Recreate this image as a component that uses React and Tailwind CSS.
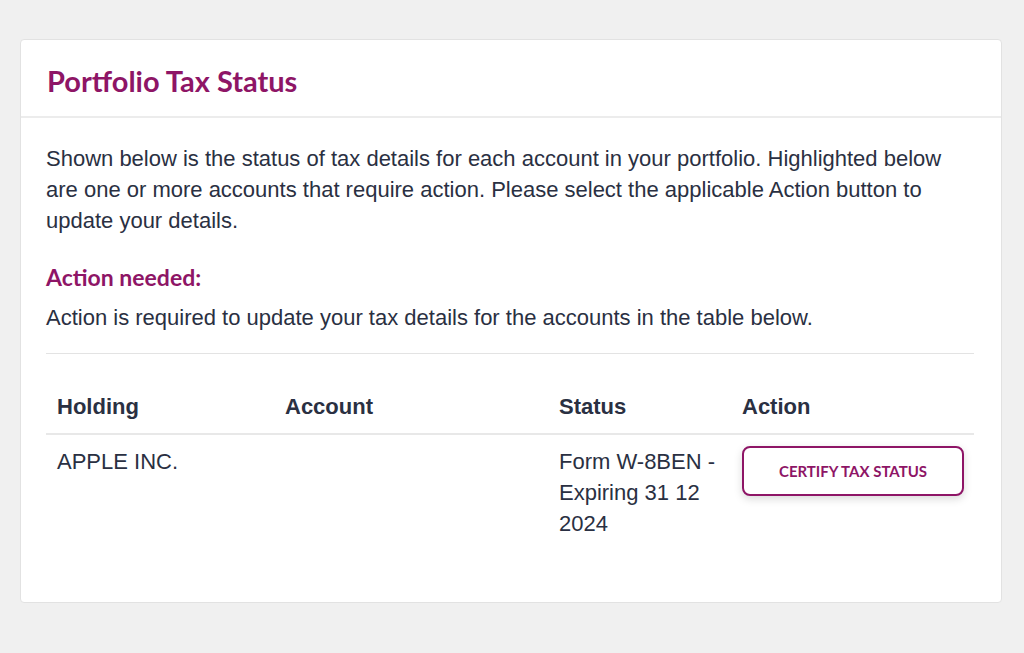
export default function App() {
  const rows = [
    { holding: 'APPLE INC.', account: '', status: 'Form W-8BEN - Expiring 31 12 2024' },
  ]

  return (
    <div className="min-h-screen w-full bg-[#f0f0f0] px-[20px] pt-[39px] pb-[49px] font-['Liberation_Sans',Arial,sans-serif] text-[#2a3042]">
      <div className="w-[982px] rounded-[4px] border border-[#e2e2e2] bg-white">
        {/* Header */}
        <div className="flex h-[78px] items-center border-b-2 border-[#ececec] px-[26px] pt-[6px]">
          <h1 className="font-['Lato',sans-serif] text-[29px] font-bold text-[#8e1566]">
            Portfolio Tax Status
          </h1>
        </div>

        {/* Body */}
        <div className="pl-[25px] pr-[27px] pt-[25px] pb-[63px]">
          <p className="text-[22px] leading-[31px]">
            Shown below is the status of tax details for each account in your portfolio. Highlighted below
            are one or more accounts that require action. Please select the applicable Action button to
            update your details.
          </p>

          <h2 className="mt-[26px] font-['Lato',sans-serif] text-[23px] font-bold leading-[31px] text-[#8e1566]">
            Action needed:
          </h2>
          <p className="mt-[9px] text-[22px] leading-[31px]">
            Action is required to update your tax details for the accounts in the table below.
          </p>

          <div className="mt-[20px] border-t border-[#e3e3e3] pt-[37px]">
            <table className="w-full table-fixed border-collapse text-left text-[22px] leading-[31px]">
              <colgroup>
                <col className="w-[228px]" />
                <col className="w-[274px]" />
                <col className="w-[183px]" />
                <col />
              </colgroup>
              <thead>
                <tr className="border-b-2 border-[#e8e8e8]">
                  <th className="px-[11px] pb-[11px] font-bold">Holding</th>
                  <th className="px-[11px] pb-[11px] font-bold">Account</th>
                  <th className="px-[11px] pb-[11px] font-bold">Status</th>
                  <th className="px-[11px] pb-[11px] font-bold">Action</th>
                </tr>
              </thead>
              <tbody>
                {rows.map((r) => (
                  <tr key={r.holding} className="align-top">
                    <td className="px-[11px] pt-[11px]">{r.holding}</td>
                    <td className="px-[11px] pt-[11px]">{r.account}</td>
                    <td className="px-[11px] pt-[11px]">{r.status}</td>
                    <td className="px-[11px] pt-[11px]">
                      <button className="flex h-[50px] w-[222px] items-center justify-center rounded-[8px] border-2 border-[#8e1566] bg-white font-['Lato',sans-serif] text-[15px] font-bold text-[#8e1566] shadow-[0_3px_8px_rgba(0,0,0,0.15)]">
                        CERTIFY TAX STATUS
                      </button>
                    </td>
                  </tr>
                ))}
              </tbody>
            </table>
          </div>
        </div>
      </div>
    </div>
  )
}
